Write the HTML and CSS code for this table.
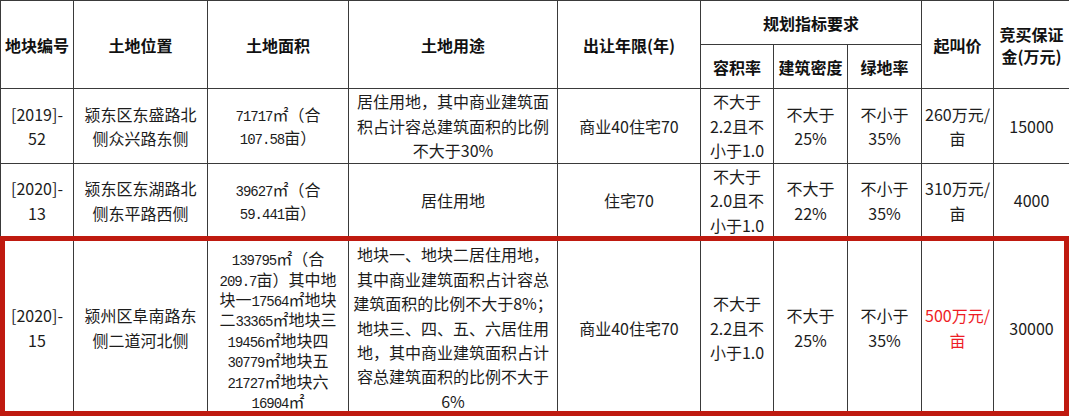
FILE: index.html
```html
<!DOCTYPE html>
<html lang="zh-CN">
<head>
<meta charset="utf-8">
<link rel="stylesheet" href="styles.css">
</head>
<body>
<div class="sheet">
<table class="land">
  <colgroup>
    <col class="c1"><col class="c2"><col class="c3"><col class="c4"><col class="c5">
    <col class="c6"><col class="c7"><col class="c8"><col class="c9"><col class="c10">
  </colgroup>
  <thead>
    <tr class="h1">
      <th rowspan="2">地块编号</th>
      <th rowspan="2">土地位置</th>
      <th rowspan="2">土地面积</th>
      <th rowspan="2">土地用途</th>
      <th rowspan="2">出让年限(年)</th>
      <th colspan="3">规划指标要求</th>
      <th rowspan="2">起叫价</th>
      <th rowspan="2">竞买保证<br>金(万元)</th>
    </tr>
    <tr class="h2">
      <th>容积率</th>
      <th>建筑密度</th>
      <th>绿地率</th>
    </tr>
  </thead>
  <tbody>
    <tr class="r1">
      <td>[2019]-<br>52</td>
      <td>颍东区东盛路北<br>侧众兴路东侧</td>
      <td class="area"><span class="num">71717</span>㎡（合<br><span class="num">107.58</span>亩）</td>
      <td class="use">居住用地，其中商业建筑面<br>积占计容总建筑面积的比例<br>不大于30%</td>
      <td>商业40住宅70</td>
      <td>不大于<br>2.2且不<br>小于1.0</td>
      <td>不大于<br>25%</td>
      <td>不小于<br>35%</td>
      <td>260万元/<br>亩</td>
      <td>15000</td>
    </tr>
    <tr class="r2">
      <td>[2020]-<br>13</td>
      <td>颍东区东湖路北<br>侧东平路西侧</td>
      <td class="area"><span class="num">39627</span>㎡（合<br><span class="num">59.441</span>亩）</td>
      <td class="use">居住用地</td>
      <td>住宅70</td>
      <td>不大于<br>2.0且不<br>小于1.0</td>
      <td>不大于<br>22%</td>
      <td>不小于<br>35%</td>
      <td>310万元/<br>亩</td>
      <td>4000</td>
    </tr>
    <tr class="r3">
      <td>[2020]-<br>15</td>
      <td>颍州区阜南路东<br>侧二道河北侧</td>
      <td class="area tight"><span class="num">139795</span>㎡（合<br><span class="num">209.7</span>亩）其中地<br>块一<span class="num">17564</span>㎡地块<br>二<span class="num">33365</span>㎡地块三<br><span class="num">19456</span>㎡地块四<br><span class="num">30779</span>㎡地块五<br><span class="num">21727</span>㎡地块六<br><span class="num">16904</span>㎡</td>
      <td class="use">地块一、地块二居住用地，<br>其中商业建筑面积占计容总<br>建筑面积的比例不大于8%；<br>地块三、四、五、六居住用<br>地，其中商业建筑面积占计<br>容总建筑面积的比例不大于<br>6%</td>
      <td>商业40住宅70</td>
      <td>不大于<br>2.2且不<br>小于1.0</td>
      <td>不大于<br>25%</td>
      <td>不小于<br>35%</td>
      <td class="hot">500万元/<br>亩</td>
      <td>30000</td>
    </tr>
  </tbody>
</table>
<div class="highlight"></div>
</div>
</body>
</html>
```

FILE: styles.css
```css
html, body {
  margin: 0;
  padding: 0;
  background: #ffffff;
}

.sheet {
  position: relative;
  width: 1069px;
  height: 416px;
  overflow: hidden;
}

.land {
  border-collapse: collapse;
  table-layout: fixed;
  width: 1069px;
  font-family: "Noto Sans CJK SC", "Microsoft YaHei", sans-serif;
  font-size: 16px;
  color: #1c1c1c;
}

.c1 { width: 73px; }
.c2 { width: 134px; }
.c3 { width: 141px; }
.c4 { width: 209px; }
.c5 { width: 143px; }
.c6 { width: 73px; }
.c7 { width: 74px; }
.c8 { width: 74px; }
.c9 { width: 72px; }
.c10 { width: 76px; }

.land th,
.land td {
  border: 1px solid #3a3a3a;
  padding: 0;
  text-align: center;
  vertical-align: middle;
  white-space: nowrap;
  line-height: 24.4px;
  overflow: hidden;
}

.land th {
  font-weight: 700;
  color: #111;
  line-height: 22px;
}

.h1 { height: 44px; }
.h2 { height: 44px; }
.r1 { height: 75px; }
.r2 { height: 73px; }
.r3 { height: 180px; }

.land td.area {
  line-height: 23px;
}

.land td.area.tight {
  line-height: 20.4px;
  padding-top: 4px;
}

.num {
  font-family: "Liberation Mono", "DejaVu Sans Mono", monospace;
  font-size: 14px;
  letter-spacing: -1px;
  line-height: 1;
}

.hot {
  color: #ee1c25;
}

.highlight {
  position: absolute;
  left: 0;
  top: 236px;
  width: 1069px;
  height: 180px;
  box-sizing: border-box;
  border: 5px solid #bf1a10;
  pointer-events: none;
}
```
